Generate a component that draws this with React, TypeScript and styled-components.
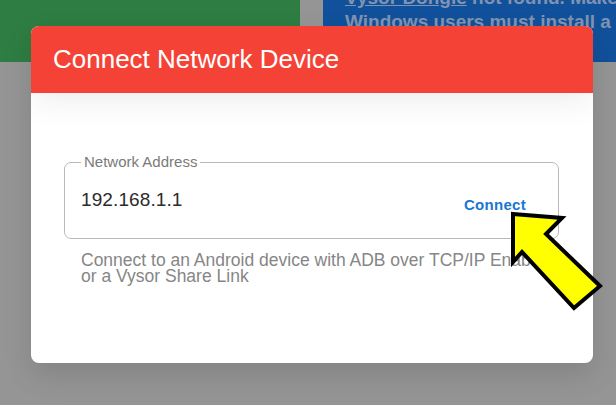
import React from 'react';
import styled, { createGlobalStyle } from 'styled-components';

const GlobalStyle = createGlobalStyle`
  html, body {
    margin: 0;
    padding: 0;
    background: #959595;
    font-family: "Liberation Sans", Arial, sans-serif;
  }
`;

const Page = styled.div`
  position: relative;
  width: 616px;
  height: 405px;
  overflow: hidden;
  background: #959595;
`;

const CardRow = styled.div`
  display: flex;
  gap: 23px;
  height: 62px;
`;

const Card = styled.div<{ bg: string; grow?: number }>`
  flex: ${(p) => p.grow ?? 1} 0 0;
  background: ${(p) => p.bg};
  overflow: hidden;
`;

const CardText = styled.div`
  padding: 0 0 0 22px;
  margin-top: -14px;
  color: #8193b0;
  font-weight: 700;
  font-size: 19px;
  line-height: 24px;
  white-space: nowrap;
  u {
    text-decoration: underline;
  }
`;

const Modal = styled.div`
  position: absolute;
  left: 31px;
  top: 26px;
  width: 562px;
  height: 337px;
  background: #fff;
  border-radius: 8px;
  overflow: hidden;
  box-shadow: 0 12px 30px rgba(0, 0, 0, 0.12);
  display: flex;
  flex-direction: column;
`;

const Header = styled.div`
  height: 67px;
  flex: none;
  background: #f44336;
  color: #fff;
  font-size: 26px;
  display: flex;
  align-items: center;
  padding-left: 22px;
  position: relative;
  z-index: 1;
  box-shadow: 0 4px 36px rgba(0, 0, 0, 0.09);
`;

const Body = styled.div`
  padding: 61px 34px 0 33px;
`;

const Field = styled.fieldset`
  margin: 0;
  height: 85px;
  box-sizing: border-box;
  border: 1px solid #b9b9b9;
  border-radius: 7px;
  padding: 0 32px 0 16px;
  display: flex;
  align-items: center;
`;

const Legend = styled.legend`
  font-size: 15px;
  color: #7a7a7a;
  padding: 0 3px;
  margin-left: 0;
  line-height: 16px;
`;

const Value = styled.div`
  flex: 1;
  font-size: 19px;
  color: #2b2b2b;
  margin-top: -8px;
  letter-spacing: 0.1px;
`;

const ConnectButton = styled.button`
  border: none;
  background: none;
  padding: 0;
  font-family: inherit;
  font-weight: 700;
  font-size: 15px;
  color: #1a76d2;
  letter-spacing: 0.3px;
`;

const Helper = styled.div`
  margin: 13px 0 0 17px;
  font-size: 17.5px;
  line-height: 16px;
  color: #868686;
  white-space: nowrap;
`;

const Arrow = styled.svg`
  position: absolute;
  left: 0;
  top: 0;
`;

export default function App() {
  return (
    <Page>
      <GlobalStyle />
      <CardRow>
        <Card bg="#2e7d42" grow={300} />
        <Card bg="#11519b" grow={293}>
          <CardText>
            <u>Vysor Dongle</u> not found. Make sure
            <br />
            Windows users must install a <u>driver</u>
          </CardText>
        </Card>
      </CardRow>
      <Modal>
        <Header>Connect Network Device</Header>
        <Body>
          <Field>
            <Legend>Network Address</Legend>
            <Value>192.168.1.1</Value>
            <ConnectButton>Connect</ConnectButton>
          </Field>
          <Helper>
            Connect to an Android device with ADB over TCP/IP Enabled
            <br />
            or a Vysor Share Link
          </Helper>
        </Body>
      </Modal>
      <Arrow width="616" height="405" viewBox="0 0 616 405">
        <polygon
          points="513,214 562,218 546,234 600,286 574,308 522,252 513,262"
          fill="#ffff00"
          stroke="#000"
          strokeWidth="4"
          strokeLinejoin="miter"
        />
      </Arrow>
    </Page>
  );
}
